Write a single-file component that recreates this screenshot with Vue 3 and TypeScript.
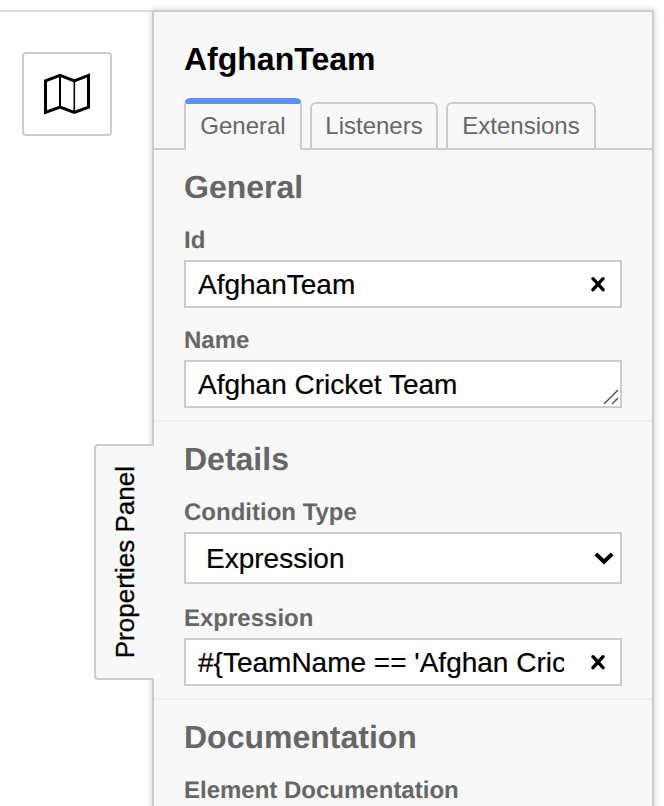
<script setup lang="ts">
import { ref } from 'vue'

const tabs: string[] = ['General', 'Listeners', 'Extensions']
const activeTab = ref('General')
const id = ref('AfghanTeam')
const name = ref('Afghan Cricket Team')
const conditionType = ref('Expression')
const expression = ref("#{TeamName == 'Afghan Cricket Team'}")
</script>

<template>
  <div class="editor">
    <main class="canvas">
      <button class="minimap" type="button">
        <svg width="50" height="42" viewBox="0 0 50 42" fill="none" stroke="#000">
          <path d="M3.5 7.9 18 2.4l14.3 5.5 14.2-5.5v31.8l-14.2 5.2L18 34.2 3.5 39.4z" stroke-width="3" />
          <path d="M18 2.5v32" stroke-width="2" />
          <path d="M32.3 8v31" stroke-width="1.6" />
        </svg>
      </button>
    </main>

    <aside class="panel">
      <button class="toggle" type="button"><span>Properties Panel</span></button>
      <h1>AfghanTeam</h1>
      <nav class="tabs">
        <button
          v-for="tab in tabs"
          :key="tab"
          type="button"
          class="tab"
          :class="{ active: tab === activeTab }"
          @click="activeTab = tab"
        >{{ tab }}</button>
      </nav>

      <section>
        <h2>General</h2>
        <label>Id</label>
        <div class="control">
          <input v-model="id" type="text" />
          <button class="clear" type="button" @click="id = ''">
            <svg width="16" height="16" viewBox="0 0 16 16"><path d="M3 2.7 13 13.7M13 2.7 3 13.7" /></svg>
          </button>
        </div>
        <label class="next">Name</label>
        <div class="control">
          <textarea v-model="name" rows="1"></textarea>
          <svg class="grip" width="16" height="16" viewBox="0 0 16 16"><path d="M1 15 15 1M9 15l6-6" /></svg>
        </div>
      </section>

      <section>
        <h2>Details</h2>
        <label>Condition Type</label>
        <div class="control select">
          <select v-model="conditionType">
            <option>Expression</option>
          </select>
          <svg class="chevron" width="20" height="14" viewBox="0 0 20 14"><path d="m1.8 2.9 8.2 7.8 8.2-7.8" /></svg>
        </div>
        <label class="next after-select">Expression</label>
        <div class="control">
          <input v-model="expression" type="text" />
          <button class="clear" type="button" @click="expression = ''">
            <svg width="16" height="16" viewBox="0 0 16 16"><path d="M3 2.7 13 13.7M13 2.7 3 13.7" /></svg>
          </button>
        </div>
      </section>

      <section>
        <h2>Documentation</h2>
        <label>Element Documentation</label>
      </section>
    </aside>
  </div>
</template>

<style>
html,
body {
  background: #fff;
  overflow: hidden;
}
</style>

<style scoped>
.editor,
.editor * {
  box-sizing: border-box;
}

.editor {
  display: flex;
  height: 806px;
  padding: 10px 10px 0 0;
  overflow: hidden;
  font-family: 'Liberation Sans', Arial, sans-serif;
  text-rendering: geometricPrecision;
}

button,
input,
textarea,
select {
  margin: 0;
  border: 0;
  border-radius: 0;
  outline: 0;
  background: transparent;
  font-family: inherit;
}

svg {
  display: block;
}

.canvas {
  width: 152px;
  padding: 40px 0 0 22px;
  border-top: 2px solid #ddd;
}

.minimap {
  display: flex;
  align-items: center;
  justify-content: center;
  width: 90px;
  height: 84px;
  padding: 0;
  border: 2px solid #ccc;
  border-radius: 4px;
  background: #fff;
}

.panel {
  position: relative;
  width: 502px;
  height: 820px;
  flex: none;
  border: 2px solid #ccc;
  background: #f8f8f8;
  box-shadow: 0 0 6px #ccc;
}

.toggle {
  position: absolute;
  left: -60px;
  top: 432px;
  display: flex;
  align-items: center;
  justify-content: center;
  width: 60px;
  height: 236px;
  padding: 0;
  border: 2px solid #ccc;
  border-right: 0;
  border-radius: 4px 0 0 4px;
  background: #f8f8f8;
  color: #000;
}

.toggle span {
  writing-mode: vertical-rl;
  transform: rotate(180deg);
  font-size: 26px;
  line-height: 30px;
  white-space: nowrap;
  -webkit-text-stroke: 0.3px #000;
}

h1,
h2 {
  margin: 0;
  font-size: 32px;
  line-height: 36px;
  font-weight: bold;
}

h1 {
  padding: 29px 30px 21px;
  color: #000;
}

.tabs {
  display: flex;
  align-items: flex-end;
  gap: 8px;
  height: 52px;
  padding-left: 30px;
  box-shadow: inset 0 -2px #ccc;
}

.tab {
  width: 128px;
  height: 48px;
  padding: 0;
  border: 2px solid #ccc;
  border-radius: 6px 6px 0 0;
  background: #f8f8f8;
  color: #666;
  font-size: 24px;
  line-height: 44px;
}

.tab:first-child {
  width: 118px;
}

.tab:last-child {
  width: 150px;
}

.tab.active {
  height: 52px;
  padding-bottom: 2px;
  border-top: 6px solid #5b8ff9;
  border-bottom: 0;
}

section {
  padding: 19px 30px 12px;
  border-bottom: 2px solid #eee;
}

h2 {
  margin-bottom: 22px;
  color: #666;
}

label {
  display: block;
  margin-bottom: 5px;
  color: #666;
  font-size: 24px;
  line-height: 28px;
  font-weight: bold;
}

label.next {
  margin-top: 19px;
}

label.after-select {
  margin-top: 21px;
}

.control {
  display: flex;
  align-items: center;
  height: 48px;
  border: 2px solid #ccc;
  background: #fff;
}

.control.select {
  height: 52px;
}

input,
textarea,
select {
  flex: 1;
  min-width: 0;
  height: 44px;
  padding: 2px 0 0;
  color: #000;
  font-size: 28px;
  line-height: 32px;
  -webkit-text-stroke: 0.2px #000;
}

input {
  margin-left: 12px;
}

textarea {
  padding: 7px 0 5px 12px;
  resize: none;
  overflow: hidden;
}

select {
  padding-left: 20px;
  appearance: none;
}

.clear {
  margin: 0 14px 0 26px;
  padding: 0;
}

.clear path {
  fill: none;
  stroke: #000;
  stroke-width: 3.4;
  stroke-linecap: round;
}

.grip {
  align-self: flex-end;
  margin: 0 1px 1px 0;
}

.grip path {
  fill: none;
  stroke: #555;
  stroke-width: 1.5;
}

.chevron {
  margin-right: 6px;
}

.chevron path {
  fill: none;
  stroke: #000;
  stroke-width: 4;
}
</style>
